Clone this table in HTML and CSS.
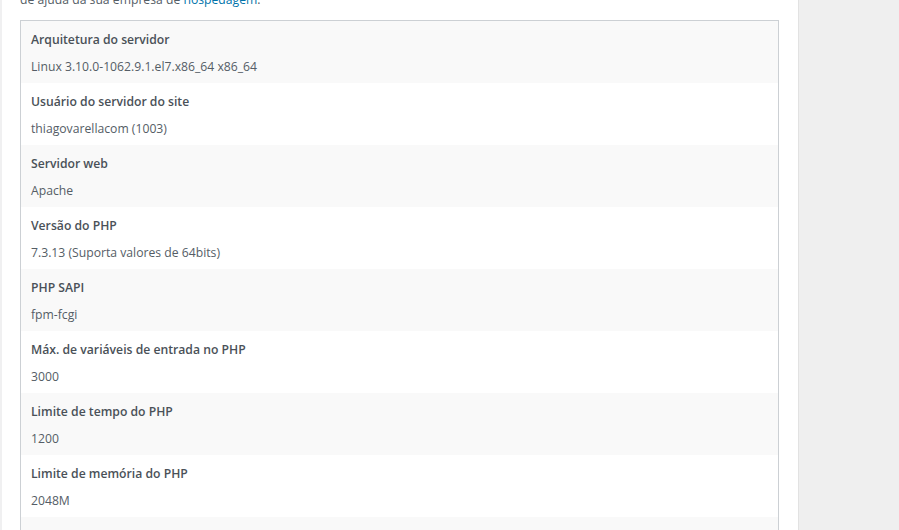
FILE: index.html
```html
<!DOCTYPE html>
<html lang="pt-BR">
<head>
<meta charset="utf-8">
<link rel="stylesheet" href="styles.css">
</head>
<body>
<div class="layout">
  <div class="edge"></div>
  <main class="main">
    <p class="intro">de ajuda da sua empresa de <a href="#">hospedagem</a>.</p>
    <dl class="info">
      <div class="row"><dt>Arquitetura do servidor</dt><dd>Linux 3.10.0-1062.9.1.el7.x86_64 x86_64</dd></div>
      <div class="row"><dt>Usuário do servidor do site</dt><dd>thiagovarellacom (1003)</dd></div>
      <div class="row"><dt>Servidor web</dt><dd>Apache</dd></div>
      <div class="row"><dt>Versão do PHP</dt><dd>7.3.13 (Suporta valores de 64bits)</dd></div>
      <div class="row"><dt>PHP SAPI</dt><dd>fpm-fcgi</dd></div>
      <div class="row"><dt>Máx. de variáveis de entrada no PHP</dt><dd>3000</dd></div>
      <div class="row"><dt>Limite de tempo do PHP</dt><dd>1200</dd></div>
      <div class="row"><dt>Limite de memória do PHP</dt><dd>2048M</dd></div>
      <div class="row row-next"></div>
    </dl>
  </main>
  <aside class="side"></aside>
</div>
</body>
</html>
```
FILE: styles.css
```css
html, body {
  margin: 0;
  padding: 0;
  height: 100%;
  overflow: hidden;
}
body {
  font-family: "Open Sans", "Noto Sans", sans-serif;
  font-size: 12.2px;
  color: #555d66;
  background: #fff;
}
.layout {
  display: flex;
  height: 530px;
}
.edge {
  width: 2px;
  background: #f0f0f1;
  flex: none;
}
.main {
  width: 797px;
  flex: none;
  padding: 0 20px 0 18px;
  box-sizing: border-box;
  border-right: 1px solid #e2e2e2;
  overflow: hidden;
}
.side {
  flex: 1;
  background: #efefef;
}
.intro {
  margin: -10px 0 0;
  line-height: 20px;
  height: 30px;
}
.intro a {
  color: #0073aa;
  text-decoration: none;
}
.info {
  margin: 0;
  width: 759px;
  border: 1px solid #ccd0d4;
  box-sizing: border-box;
}
.row {
  padding: 9px 10px 6px;
}
.row:nth-child(odd) {
  background: #f9f9f9;
}
.row-next {
  height: 62px;
  box-sizing: border-box;
}
.row dt {
  font-weight: 600;
  line-height: 20px;
  color: #4a5158;
}
.row dd {
  margin: 7px 0 0;
  line-height: 20px;
}
```
